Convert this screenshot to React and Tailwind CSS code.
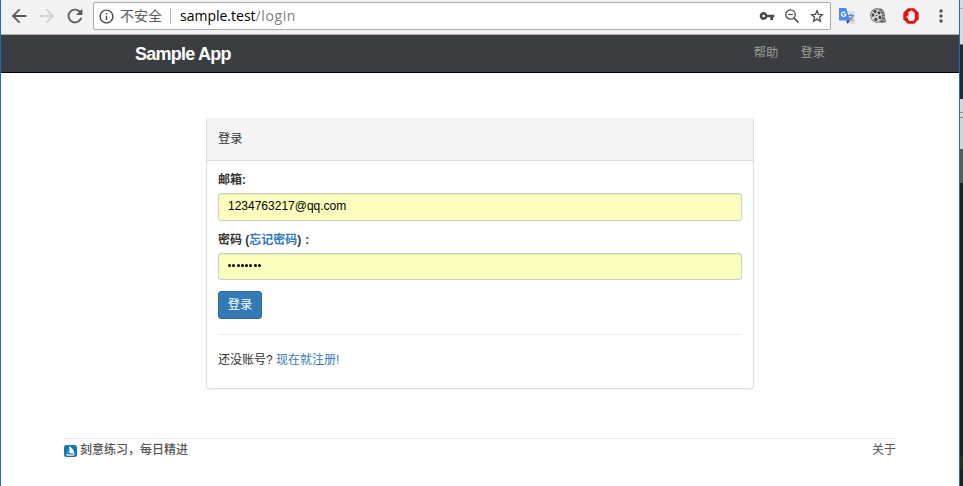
import React from "react";
import {
  MdArrowBack,
  MdArrowForward,
  MdRefresh,
  MdInfoOutline,
  MdVpnKey,
  MdMoreVert,
} from "react-icons/md";

function TranslateIcon() {
  return (
    <svg width="16" height="16" viewBox="0 0 16 16" className="ml-[8px] shrink-0">
      <path d="M6 3h9.200a.8.8 0 0 1 .8.8v11.400a.8.8 0 0 1-.8.8H9z" fill="#dcdcdc" />
      <path d="M8.500 7.500h6.500M11.800 6v1.500M13.900 7.500c-.6 2.500-2 4.200-4 5.300M10.400 9.300c1 1.600 2 2.700 3.900 3.500" stroke="#5f8796" strokeWidth="1.200" fill="none" />
      <path d="M7 12.300h4.300L8.500 16z" fill="#3040b0" />
      <path d="M.8 0h6.400l3.800 12.500H.8a.8.8 0 0 1-.8-.8V.8A.8.8 0 0 1 .8 0z" fill="#4a8af4" />
      <path d="M6.300 4.700A2.200 2.200 0 1 0 6.900 6.400H4.900" stroke="#fff" strokeWidth="1.200" fill="none" />
    </svg>
  );
}

function ReelIcon() {
  return (
    <svg width="17" height="16" viewBox="0 0 17 16" className="ml-[15px] shrink-0">
      <path d="M5.500.6h4.500c3.600.4 5 3.900 5 7.900 0 2 .5 3.800 1.500 4.800-2 1.800-5.500 2-8 .8z" fill="#666" />
      <path d="M11.500 2.800l2 .8M12.700 5.500l2 .8M13 8.500l2 .8M12 11.500l3 1.200" stroke="#c8c8c8" strokeWidth="1.100" />
      <ellipse cx="6.600" cy="7.600" rx="5.900" ry="6.900" transform="rotate(-12 6.600 7.600)" fill="#d2d2d2" stroke="#666" strokeWidth=".8" />
      <g fill="#444">
        <ellipse cx="5" cy="3.500" rx="1.700" ry="1.400" />
        <ellipse cx="9" cy="4.800" rx="1.500" ry="1.600" />
        <ellipse cx="3" cy="7" rx="1.300" ry="1.700" />
        <ellipse cx="9.900" cy="9.400" rx="1.300" ry="1.800" />
        <ellipse cx="5.800" cy="11.400" rx="1.600" ry="1.600" />
        <circle cx="6.400" cy="7.500" r=".8" />
      </g>
    </svg>
  );
}

function BlockIcon() {
  return (
    <svg width="16" height="16" viewBox="0 0 16 16" className="ml-[16px] shrink-0">
      <path d="M4.800.3h6.400l4.500 4.500v6.400l-4.500 4.500H4.800L.3 11.200V4.800z" fill="#e41218" />
      <path d="M5.600 11.900 3.700 8.600c-.3-.8.600-1.200 1.100-.6l.7.900V4.300c0-.9 1.200-.9 1.200 0v-.9c0-.9 1.300-.9 1.300 0V3c0-.9 1.300-.9 1.300 0v.8c0-.9 1.300-.8 1.300 0v1.400c0-.8 1.200-.8 1.200 0v4.600c0 2-1 3.200-2.700 3.200-1.500 0-2.500 0-3.500-1.100z" fill="#fff" />
      <path d="M6.700 4.500v3M8 4v3.500M9.300 4v3.500M10.600 5v2.500" stroke="#f3a9ab" strokeWidth=".3" />
    </svg>
  );
}

function ZoomOutIcon() {
  return (
    <svg width="14" height="14" viewBox="0 0 14 14" className="ml-[10px] shrink-0" fill="none" stroke="currentColor">
      <circle cx="5.500" cy="5.500" r="4.700" strokeWidth="1.300" />
      <path d="M3.200 5.500h4.600" strokeWidth="1.200" />
      <path d="M9 9l4.300 4.300" strokeWidth="1.700" />
    </svg>
  );
}

function StarIcon() {
  return (
    <svg width="14" height="14" viewBox="0 0 14 14" className="ml-[11px] shrink-0" fill="none" stroke="currentColor" strokeWidth="1.300">
      <path d="M7 1.700l1.500 3.700 4 .3-3 2.600.9 3.900L7 10.100l-3.400 2.100.9-3.900-3-2.600 4-.3z" />
    </svg>
  );
}

function SailIcon() {
  return (
    <svg width="13" height="12" viewBox="0 0 13 12" className="mr-[3px] mt-[2px] shrink-0">
      <rect width="13" height="12" rx="2.500" fill="#1479ad" />
      <path d="M5 1c3.200 1.700 5 4.400 5.300 7.700L5.600 8.200z" fill="#fff" />
      <path d="M4.400 4.200 4.700 8 2.700 7.700z" fill="#5aa5cc" />
      <path d="M1.700 8.700c3 .9 6 1 9.400.2-.6 1.200-1.600 1.900-3 1.900H4.500c-1.400 0-2.300-.7-2.800-2.100z" fill="#e4f2f8" />
    </svg>
  );
}

function BrowserBar() {
  return (
    <div className="flex h-[35px] shrink-0 items-start border-b border-[#a9adad] bg-[#f2f2f2]">
      <div className="flex h-8 w-[92px] shrink-0 items-center pl-[7px] text-[#5a5a5a]">
        <MdArrowBack size={22} />
        <MdArrowForward size={22} className="ml-[6px] text-[#d2d2d2]" />
        <MdRefresh size={22} className="ml-[6px]" />
      </div>
      <div className="mt-[2px] flex h-[28px] w-[738px] shrink-0 items-center rounded-[2px] border border-[#a9a9a9] bg-white text-[#4a4a4a]">
        <MdInfoOutline size={17} className="ml-[4px] shrink-0" />
        <span className="ml-[5px] w-[42px] whitespace-nowrap text-[14px] leading-5 text-[#5a5a5a]">不安全</span>
        <span className="ml-[8px] h-4 w-px bg-[#b0b0b0]" />
        <span className="ml-[9px] whitespace-nowrap font-['Open_Sans','Noto_Sans',sans-serif] text-[14px] leading-5 text-black">
          sample.test<span className="tracking-[0.6px] text-[#808080]">/login</span>
        </span>
        <div className="ml-auto flex items-center pr-[6px]">
          <MdVpnKey size={16} />
          <ZoomOutIcon />
          <StarIcon />
        </div>
      </div>
      <div className="flex h-8 items-center">
        <TranslateIcon />
        <ReelIcon />
        <BlockIcon />
        <MdMoreVert size={20} className="ml-[12px] text-[#5a5a5a]" />
      </div>
    </div>
  );
}

function NavBar() {
  return (
    <header className="flex h-[38px] shrink-0 items-start border-b border-black bg-[#3c3d41] pl-[134px] pr-[134px]">
      <a className="mt-[7px] whitespace-nowrap text-[18px] font-bold leading-6 tracking-[-0.75px] text-white">Sample App</a>
      <nav className="ml-auto mt-[9px] flex gap-[22px] text-[12.300px] leading-[18px] text-[#9d9d9d]">
        <a>帮助</a>
        <a>登录</a>
      </nav>
    </header>
  );
}

function LoginPanel() {
  return (
    <section className="ml-[205px] mt-[45px] h-[271px] w-[548px] shrink-0 rounded-[3px] border border-t-[#f4f4f4] border-x-[#dddddd] border-b-[#dddddd] bg-white shadow-[0_1px_1px_rgba(0,0,0,0.05)]">
      <div className="flex h-[42px] items-center rounded-t-[2px] border-b border-[#dddddd] bg-[#f4f4f4] px-[11px] pb-px">
        <h5 className="text-[12.300px] leading-[18px]">登录</h5>
      </div>
      <form className="flex flex-col px-[11px] pt-[9px]">
        <label className="h-[23px] text-[12px] font-bold leading-[20px]">邮箱:</label>
        <div className="flex h-[28px] items-center rounded-[3px] border border-[#cccccc] bg-[#faffbd] px-[9px] pb-[2px] text-[12px] text-black shadow-[inset_0_1px_1px_rgba(0,0,0,0.075)]">
          1234763217@qq.com
        </div>
        <label className="mt-[9px] h-[23px] text-[12px] font-bold leading-[20px]">
          密码 (<a className="text-[#337ab7]">忘记密码</a>)<span className="ml-[4px]">:</span>
        </label>
        <div className="flex h-[27px] items-center gap-[1.300px] rounded-[3px] border border-[#cccccc] bg-[#faffbd] px-[9px] pb-[2px] shadow-[inset_0_1px_1px_rgba(0,0,0,0.075)]">
          {Array.from({ length: 8 }, (_, i) => (
            <span key={i} className="h-[3px] w-[3px] rounded-full bg-black" />
          ))}
        </div>
        <button type="button" className="mt-[11px] h-[28px] w-[44px] rounded-[3px] border border-[#2e6da4] bg-[#337ab7] text-[12.300px] leading-[24px] text-white">
          登录
        </button>
        <hr className="mt-[15px] border-t border-[#eeeeee]" />
        <p className="mt-[15px] whitespace-nowrap text-[12px] leading-[20px]">
          还没账号? <a className="text-[#337ab7]">现在就注册!</a>
        </p>
      </form>
    </section>
  );
}

function DesktopEdge() {
  return (
    <div className="flex w-[3px] shrink-0 flex-col bg-[#1e2221]">
      <div className="h-[8px] bg-[#d9dadd]" />
      <div className="h-px bg-[#aaaaaa]" />
      <div className="h-[35px] bg-[#d9dadd]" />
      <div className="h-px bg-[#777777]" />
      <div className="h-[54px] bg-[#202a35]" />
      <div className="h-[13px] bg-[#d5d6d9]" />
      <div className="h-px bg-[#888888]" />
      <div className="h-[4px] bg-[#d8d9d6]" />
      <div className="h-px bg-[#888888]" />
      <div className="h-[31px] bg-[#d3d4d7]" />
      <div className="h-[34px] bg-[#595b5a]" />
      <div className="mt-[273px] h-[13px] bg-[#292e26]" />
    </div>
  );
}

export default function App() {
  return (
    <div className="flex h-[486px] w-[963px] overflow-hidden bg-white font-['Liberation_Sans','Noto_Sans_CJK_SC',sans-serif] text-[#333333]">
      <div className="flex w-[960px] shrink-0 flex-col border-x border-[#1672b8]">
        <BrowserBar />
        <NavBar />
        <LoginPanel />
        <footer className="ml-[63px] mt-[49px] flex h-[30px] w-[832px] items-start border-t border-[#eaeaea] pt-[2px] text-[12px] leading-[18px] text-[#555555]">
          <div className="flex items-center whitespace-nowrap font-medium">
            <SailIcon />
            刻意练习，每日精进
          </div>
          <a className="ml-auto">关于</a>
        </footer>
      </div>
      <DesktopEdge />
    </div>
  );
}
